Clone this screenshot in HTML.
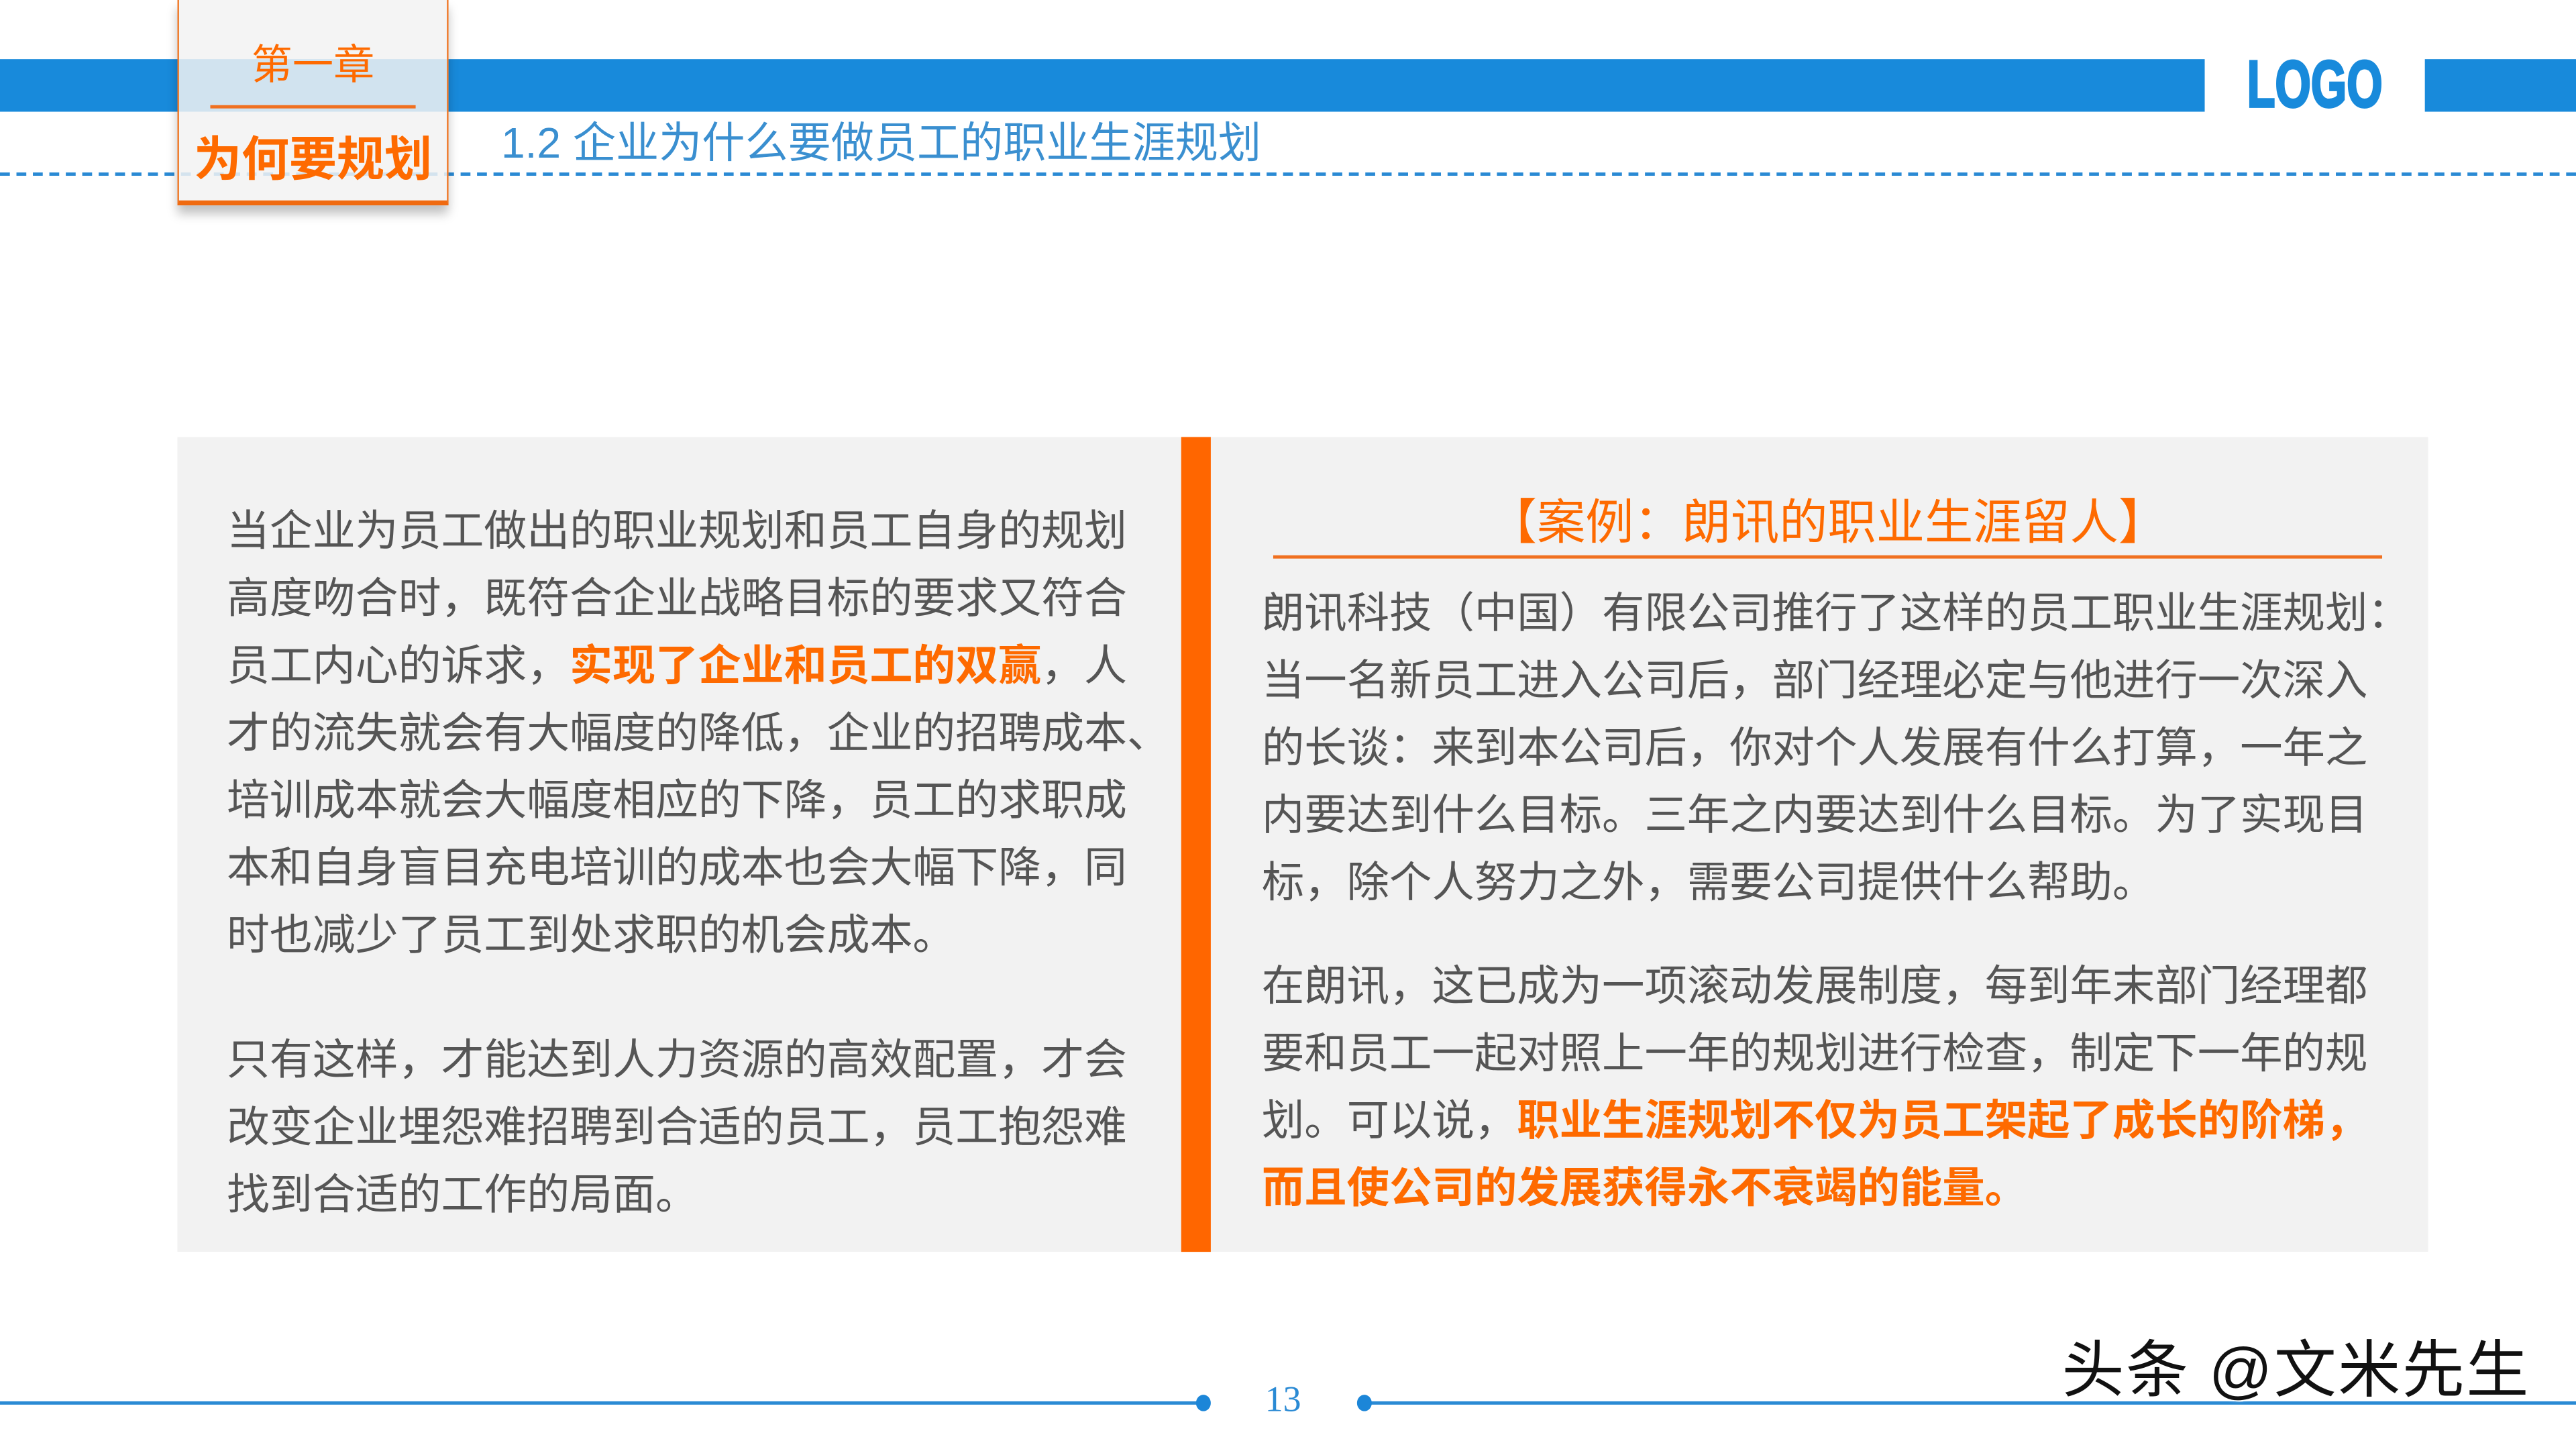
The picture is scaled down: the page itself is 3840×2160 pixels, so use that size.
<!DOCTYPE html>
<html><head><meta charset="utf-8">
<style>
html,body{margin:0;padding:0;background:#fff;}
body{width:3840px;height:2160px;overflow:hidden;}
#s{position:absolute;left:0;top:0;width:1568px;height:882px;transform:scale(2.44898);transform-origin:0 0;font-family:"Liberation Sans","Noto Sans CJK SC",sans-serif;}
.a{position:absolute;}
.t{position:absolute;white-space:nowrap;color:#555;}
.o{color:#fe6a00;font-weight:bold;}
</style></head><body>
<div id="s">
  <div class="a" style="left:0;top:36px;width:1342px;height:32px;background:#188adb"></div>
  <div class="a" style="left:1476px;top:36px;width:92px;height:32px;background:#188adb"></div>
  <div class="a" style="left:1349px;top:29px;width:120px;text-align:center;font-size:40px;line-height:46px;font-weight:bold;color:#188adb;transform:scaleX(0.7);transform-origin:50% 50%;-webkit-text-stroke:1.5px #188adb">LOGO</div>
  <div class="a" style="left:0;top:105px;width:1568px;border-top:2px dashed #2a8ad4"></div>
  <div class="a" style="left:108px;top:0;width:163px;height:122px;background:rgba(242,242,242,0.85);border-left:1px solid #f07a2a;border-right:1px solid #f07a2a;border-bottom:3px solid #f06a10;box-shadow:0 5px 6px rgba(0,0,0,0.25)"></div>
  <div class="a" style="left:108px;top:24px;width:165px;text-align:center;font-size:25px;line-height:32px;color:#fe6a00">第一章</div>
  <div class="a" style="left:128px;top:64px;width:125px;height:2px;background:#f07020"></div>
  <div class="a" style="left:108px;top:80px;width:165px;text-align:center;font-size:29px;line-height:36px;color:#fe6a00;font-weight:bold">为何要规划</div>
  <div class="t" style="left:305px;top:70px;font-size:26.2px;line-height:34px;color:#3a8fd0">1.2 企业为什么要做员工的职业生涯规划</div>

  <div class="a" style="left:108px;top:266px;width:1370px;height:496px;background:#f2f2f2"></div>
  <div class="a" style="left:719px;top:266px;width:18px;height:496px;background:#ff6600"></div>

  <div class="t" style="left:138px;top:303px;font-size:26.1px;line-height:41px">当企业为员工做出的职业规划和员工自身的规划<br>高度吻合时，既符合企业战略目标的要求又符合<br>员工内心的诉求，<span class="o">实现了企业和员工的双赢</span>，人<br>才的流失就会有大幅度的降低，企业的招聘成本、<br>培训成本就会大幅度相应的下降，员工的求职成<br>本和自身盲目充电培训的成本也会大幅下降，同<br>时也减少了员工到处求职的机会成本。</div>
  <div class="t" style="left:138px;top:625px;font-size:26.1px;line-height:41px">只有这样，才能达到人力资源的高效配置，才会<br>改变企业埋怨难招聘到合适的员工，员工抱怨难<br>找到合适的工作的局面。</div>

  <div class="t" style="left:775px;top:300px;width:675px;text-align:center;font-size:29.5px;line-height:38px;color:#fe6a00">【案例：朗讯的职业生涯留人】</div>
  <div class="a" style="left:775px;top:338px;width:675px;height:2px;background:#f07020"></div>
  <div class="t" style="left:768px;top:354px;font-size:25.9px;line-height:41px">朗讯科技（中国）有限公司推行了这样的员工职业生涯规划：<br>当一名新员工进入公司后，部门经理必定与他进行一次深入<br>的长谈：来到本公司后，你对个人发展有什么打算，一年之<br>内要达到什么目标。三年之内要达到什么目标。为了实现目<br>标，除个人努力之外，需要公司提供什么帮助。</div>
  <div class="t" style="left:768px;top:581px;font-size:25.9px;line-height:41px">在朗讯，这已成为一项滚动发展制度，每到年末部门经理都<br>要和员工一起对照上一年的规划进行检查，制定下一年的规<br>划。可以说，<span class="o">职业生涯规划不仅为员工架起了成长的阶梯，</span><br><span class="o">而且使公司的发展获得永不衰竭的能量。</span></div>

  <div class="a" style="left:0;top:853px;width:732px;height:2px;background:#2a8ad4"></div>
  <div class="a" style="left:830px;top:853px;width:738px;height:2px;background:#2a8ad4"></div>
  <div class="a" style="left:728px;top:849px;width:9px;height:10px;border-radius:50%;background:#1c86d8"></div>
  <div class="a" style="left:826px;top:849px;width:9px;height:10px;border-radius:50%;background:#1c86d8"></div>
  <div class="t" style="left:760px;top:839px;width:42px;text-align:center;font-size:22px;line-height:26px;color:#2a8ad4;font-family:'Liberation Serif',serif">13</div>
  <div class="t" style="left:1255px;top:812px;font-size:38px;line-height:46px;color:#111;letter-spacing:1px;text-shadow:0 0 2px #fff,1px 1px 0 #fff,-1px -1px 0 #fff">头条 @文米先生</div>
</div>
</body></html>
